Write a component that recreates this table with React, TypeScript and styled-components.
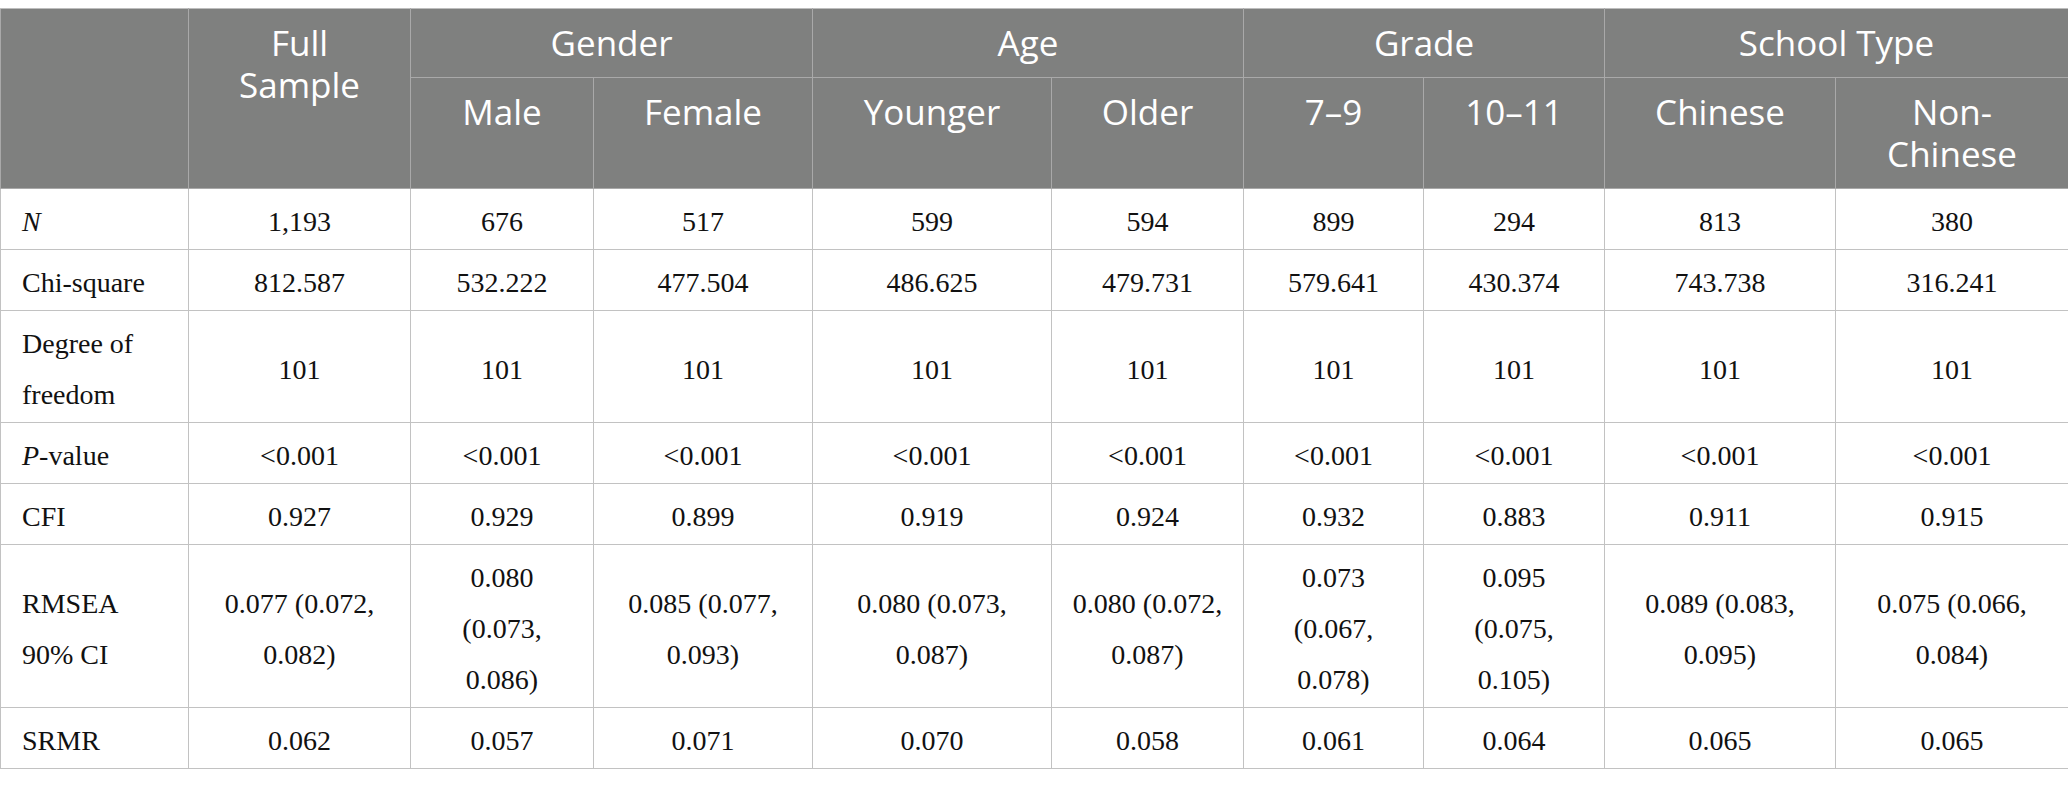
import styled, { createGlobalStyle } from 'styled-components';

const GlobalStyle = createGlobalStyle`
  html, body {
    margin: 0;
    padding: 0;
    background: #ffffff;
  }
  body {
    padding-top: 8px;
  }
`;

const Table = styled.table`
  width: 2068px;
  table-layout: fixed;
  border-collapse: collapse;
  font-family: 'Liberation Serif', 'Times New Roman', serif;
  color: #111111;
`;

const Col = styled.col<{ $w: number }>`
  width: ${(p) => p.$w}px;
`;

const HeadCell = styled.th<{ $top?: boolean }>`
  background: #7f807f;
  color: #ffffff;
  font-family: 'Open Sans', 'Noto Sans', sans-serif;
  font-weight: 400;
  font-size: 35px;
  line-height: 42px;
  text-align: center;
  vertical-align: ${(p) => (p.$top ? 'top' : 'middle')};
  padding: 13px 10px 13px;
  border: 1px solid #a9a9a9;
  border-top-color: #bdbdbd;
`;

const BodyCell = styled.td<{ $label?: boolean }>`
  font-size: 28px;
  line-height: 51px;
  text-align: ${(p) => (p.$label ? 'left' : 'center')};
  vertical-align: middle;
  padding: ${(p) => (p.$label ? '7px 10px 2px 21px' : '7px 8px 2px 8px')};
  border: 1px solid #c2c2c2;
`;

const Italic = styled.i`
  font-style: italic;
`;

const widths = [188, 222, 183, 219, 239, 192, 180, 181, 231, 233];

interface RowData {
  label: React.ReactNode;
  cells: string[][];
}

const one = (vals: string[]) => vals.map((v) => [v]);

const rows: RowData[] = [
  { label: <Italic>N</Italic>, cells: one(['1,193', '676', '517', '599', '594', '899', '294', '813', '380']) },
  {
    label: 'Chi-square',
    cells: one(['812.587', '532.222', '477.504', '486.625', '479.731', '579.641', '430.374', '743.738', '316.241']),
  },
  {
    label: (
      <>
        Degree of
        <br />
        freedom
      </>
    ),
    cells: one(['101', '101', '101', '101', '101', '101', '101', '101', '101']),
  },
  {
    label: (
      <>
        <Italic>P</Italic>-value
      </>
    ),
    cells: one(['<0.001', '<0.001', '<0.001', '<0.001', '<0.001', '<0.001', '<0.001', '<0.001', '<0.001']),
  },
  { label: 'CFI', cells: one(['0.927', '0.929', '0.899', '0.919', '0.924', '0.932', '0.883', '0.911', '0.915']) },
  {
    label: (
      <>
        RMSEA
        <br />
        90% CI
      </>
    ),
    cells: [
      ['0.077 (0.072,', '0.082)'],
      ['0.080', '(0.073,', '0.086)'],
      ['0.085 (0.077,', '0.093)'],
      ['0.080 (0.073,', '0.087)'],
      ['0.080 (0.072,', '0.087)'],
      ['0.073', '(0.067,', '0.078)'],
      ['0.095', '(0.075,', '0.105)'],
      ['0.089 (0.083,', '0.095)'],
      ['0.075 (0.066,', '0.084)'],
    ],
  },
  { label: 'SRMR', cells: one(['0.062', '0.057', '0.071', '0.070', '0.058', '0.061', '0.064', '0.065', '0.065']) },
];

const groups = [
  { name: 'Gender', subs: [['Male'], ['Female']] },
  { name: 'Age', subs: [['Younger'], ['Older']] },
  { name: 'Grade', subs: [['7–9'], ['10–11']] },
  { name: 'School Type', subs: [['Chinese'], ['Non-', 'Chinese']] },
];

const lines = (parts: string[]) =>
  parts.map((p, i) => (
    <span key={i}>
      {i > 0 && <br />}
      {p}
    </span>
  ));

function App() {
  return (
    <>
      <GlobalStyle />
      <Table>
        <colgroup>
          {widths.map((w, idx) => (
            <Col key={idx} $w={w} />
          ))}
        </colgroup>
        <thead>
          <tr>
            <HeadCell rowSpan={2} />
            <HeadCell rowSpan={2} $top>
              Full
              <br />
              Sample
            </HeadCell>
            {groups.map((g) => (
              <HeadCell key={g.name} colSpan={2}>
                {g.name}
              </HeadCell>
            ))}
          </tr>
          <tr>
            {groups.map((g) =>
              g.subs.map((s, idx) => (
                <HeadCell key={g.name + idx} $top>
                  {lines(s)}
                </HeadCell>
              ))
            )}
          </tr>
        </thead>
        <tbody>
          {rows.map((row, idx) => (
            <tr key={idx}>
              <BodyCell $label>{row.label}</BodyCell>
              {row.cells.map((c, ci) => (
                <BodyCell key={ci}>{lines(c)}</BodyCell>
              ))}
            </tr>
          ))}
        </tbody>
      </Table>
    </>
  );
}

export default App;
